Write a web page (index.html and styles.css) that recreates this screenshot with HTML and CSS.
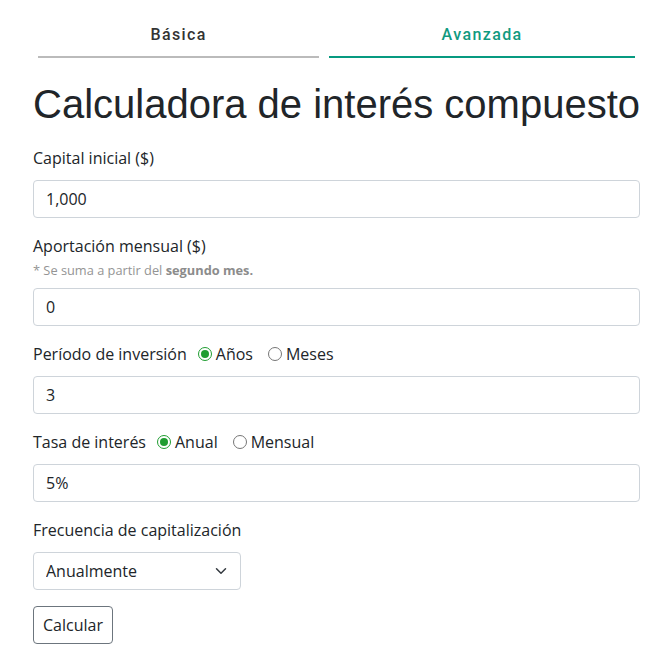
FILE: index.html
```html
<!DOCTYPE html>
<html lang="es">
<head>
<meta charset="utf-8">
<title>Calculadora de interés compuesto</title>
<link rel="stylesheet" href="styles.css">
</head>
<body>
<div class="page">
  <nav class="tabs">
    <a class="tab">Básica</a>
    <a class="tab active">Avanzada</a>
  </nav>
  <h1 class="title">Calculadora de interés compuesto</h1>
  <form class="calc">
    <div class="group">
      <label class="lbl">Capital inicial ($)</label>
      <input class="field" type="text" value="1,000">
    </div>
    <div class="group">
      <label class="lbl">Aportación mensual ($)</label>
      <div class="hint">* Se suma a partir del <b>segundo mes.</b></div>
      <input class="field" type="text" value="0">
    </div>
    <div class="group">
      <div class="lbl row">
        <span>Período de inversión</span>
        <label class="opt first"><input class="radio" type="radio" name="p" checked><span>Años</span></label>
        <label class="opt"><input class="radio" type="radio" name="p"><span>Meses</span></label>
      </div>
      <input class="field" type="text" value="3">
    </div>
    <div class="group">
      <div class="lbl row">
        <span>Tasa de interés</span>
        <label class="opt first"><input class="radio" type="radio" name="t" checked><span>Anual</span></label>
        <label class="opt"><input class="radio" type="radio" name="t"><span>Mensual</span></label>
      </div>
      <input class="field" type="text" value="5%">
    </div>
    <div class="group">
      <label class="lbl">Frecuencia de capitalización</label>
      <div class="select-wrap">
        <select class="field select">
          <option>Anualmente</option>
        </select>
        <svg class="chev" width="16" height="12" viewBox="0 0 16 16"><path d="M2 5l6 6 6-6" fill="none" stroke="#343a40" stroke-width="2" stroke-linecap="round" stroke-linejoin="round"/></svg>
      </div>
    </div>
    <button class="btn" type="button">Calcular</button>
  </form>
</div>
</body>
</html>
```

FILE: styles.css
```css
* { box-sizing: border-box; }
html, body { margin: 0; padding: 0; background: #fff; }
body {
  font-family: "Open Sans", "Noto Sans", sans-serif;
  font-size: 16px;
  line-height: 24px;
  color: #212529;
}
.page { padding: 23px 31px 0 33px; }
.tabs { display: flex; }
.tab {
  flex: 1 1 auto;
  margin: 0 5px;
  text-align: center;
  font-family: Roboto, sans-serif;
  font-weight: 500;
  font-size: 16px;
  line-height: 24px;
  letter-spacing: 1.4px;
  color: #333;
  padding: 0 0 9px;
  border-bottom: 2px solid #bbbbbb;
}
.tab.active { color: #109a80; border-bottom-color: #069a80; }
.title {
  font-family: "Liberation Sans", Arial, sans-serif;
  font-weight: 400;
  font-size: 40px;
  line-height: 48px;
  margin: 22px 0 18px;
  color: #212529;
  white-space: nowrap;
}
.group { margin-bottom: 16px; display: flex; flex-direction: column; }
.lbl { display: block; line-height: 24px; margin-bottom: 10px; }
.row { display: flex; align-items: center; }
.group .lbl:has(+ .hint) { margin-bottom: 2px; }
.hint {
  font-size: 12.8px;
  line-height: 20px;
  color: #949494;
  margin-bottom: 8px;
}
.hint b { font-weight: 700; color: #8c8c8c; }
.opt { display: flex; align-items: center; gap: 4px; margin-left: 15px; }
.opt.first { margin-left: 11px; }
.radio {
  appearance: none;
  -webkit-appearance: none;
  width: 14px; height: 14px;
  margin: 0;
  border: 1px solid #767676;
  border-radius: 50%;
  background: #fff;
  position: relative;
}
.radio:checked { border: 1.5px solid #1f9d31; }
.radio:checked::after {
  content: "";
  position: absolute;
  left: 50%; top: 50%;
  width: 8px; height: 8px;
  margin: -4px 0 0 -4px;
  border-radius: 50%;
  background: #1f9d31;
}
.field {
  display: block;
  width: 100%;
  height: 38px;
  padding: 6px 12px;
  font-family: inherit;
  font-size: 16px;
  line-height: 24px;
  color: #212529;
  background: #fff;
  border: 1px solid #ced4da;
  border-radius: 4px;
  outline: none;
}
.select-wrap { position: relative; width: 208px; }
.select { appearance: none; -webkit-appearance: none; width: 208px; padding-right: 36px; }
.chev { position: absolute; right: 12px; top: 13px; pointer-events: none; }
.btn {
  font-family: inherit;
  font-size: 16px;
  line-height: 24px;
  color: #212529;
  background: #fff;
  border: 1px solid #6c757d;
  border-radius: 4px;
  padding: 6px 9px;
  height: 38px;
}
```
